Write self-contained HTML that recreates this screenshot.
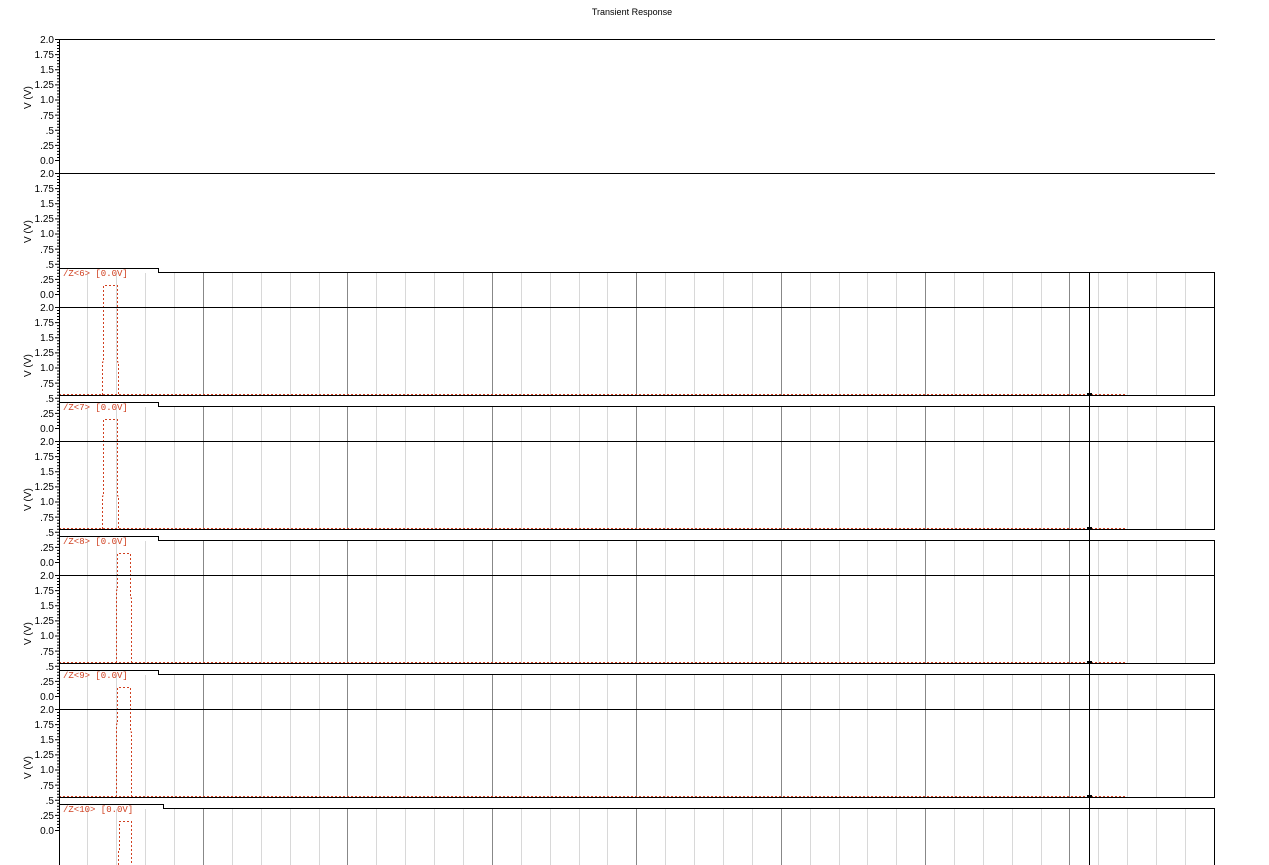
<!DOCTYPE html>
<html><head><meta charset="utf-8"><style>
html,body{margin:0;padding:0;background:#fff;width:1269px;height:865px;overflow:hidden}
svg{display:block}
text{font-family:"Liberation Sans",sans-serif;font-size:10px;fill:#000}
.lbl{font-family:"Liberation Mono",monospace;font-size:9px;fill:#d04020}
</style></head><body>
<svg width="1269" height="865" viewBox="0 0 1269 865" xmlns="http://www.w3.org/2000/svg">
<defs>
<g id="grid">
<path stroke="#d8d8d8" stroke-width="1" d="M87.5 0v122M116.5 0v122M145.5 0v122M174.5 0v122M232.5 0v122M261.5 0v122M290.5 0v122M319.5 0v122M376.5 0v122M405.5 0v122M434.5 0v122M463.5 0v122M521.5 0v122M550.5 0v122M579.5 0v122M607.5 0v122M665.5 0v122M694.5 0v122M723.5 0v122M752.5 0v122M810.5 0v122M839.5 0v122M867.5 0v122M896.5 0v122M954.5 0v122M983.5 0v122M1012.5 0v122M1041.5 0v122M1098.5 0v122M1127.5 0v122M1156.5 0v122M1185.5 0v122"/>
<path stroke="#888" stroke-width="1" d="M203.5 0v122M347.5 0v122M492.5 0v122M636.5 0v122M781.5 0v122M925.5 0v122M1069.5 0v122"/>
</g>
<g id="ticks" stroke="#000" stroke-width="1">
<path d="M55 0.5h4M55 15.6h4M55 30.8h4M55 45.9h4M55 61h4M55 76.1h4M55 91.2h4M55 106.4h4M55 121.5h4"/>
<path d="M57 3.5h2M57 6.5h2M57 9.5h2M57 12.5h2M57 18.6h2M57 21.6h2M57 24.7h2M57 27.7h2M57 33.8h2M57 36.8h2M57 39.8h2M57 42.9h2M57 48.9h2M57 51.9h2M57 55h2M57 58h2M57 64h2M57 67.1h2M57 70.1h2M57 73.1h2M57 79.2h2M57 82.2h2M57 85.2h2M57 88.2h2M57 94.3h2M57 97.3h2M57 100.3h2M57 103.4h2M57 109.4h2M57 112.4h2M57 115.4h2M57 118.5h2"/>
</g>
</defs>

<text x="632" y="15" text-anchor="middle" style="font-size:9px">Transient Response</text>

<use href="#ticks" y="39"/>
<use href="#ticks" y="173"/>
<use href="#ticks" y="307"/>
<use href="#ticks" y="441"/>
<use href="#ticks" y="575"/>
<use href="#ticks" y="709"/>

<use href="#grid" y="273"/>
<use href="#grid" y="407"/>
<use href="#grid" y="541"/>
<use href="#grid" y="675"/>
<use href="#grid" y="809"/>

<g fill="#fff"><rect x="60" y="269" width="98" height="4"/><rect x="60" y="403" width="98" height="4"/><rect x="60" y="537" width="98" height="4"/><rect x="60" y="671" width="98" height="4"/><rect x="60" y="805" width="103" height="4"/></g>

<g fill="none" stroke="#d04020" stroke-width="1" stroke-dasharray="2,2">
<path d="M102.5 395V362H103.5V285.5H117.5V362H118.5V395"/>
<path d="M102.5 529V496H103.5V419.5H117.5V496H118.5V529"/>
<path d="M116.5 663V590H117.5V553.5H130.5V598H131.5V663"/>
<path d="M116.5 797V724H117.5V687.5H130.5V732H131.5V797"/>
<path d="M118.5 865V850H119.5V821.5H131.5V865"/>
<path d="M59 394.5H1126M59 528.5H1126M59 662.5H1126M59 796.5H1126"/>
</g>

<g fill="none" stroke="#000" stroke-width="1">
<path d="M59.5 39v826"/>
<path d="M59 39.5H1215M59 173.5H1215M59 307.5H1215M59 441.5H1215M59 575.5H1215M59 709.5H1215"/>
<path d="M59 268.5H158.5V272.5H1214.5V395.5H59"/>
<path d="M59 402.5H158.5V406.5H1214.5V529.5H59"/>
<path d="M59 536.5H158.5V540.5H1214.5V663.5H59"/>
<path d="M59 670.5H158.5V674.5H1214.5V797.5H59"/>
<path d="M59 804.5H163.5V808.5H1214.5V865"/>
<path d="M1089.5 273V865"/>
</g>
<g fill="#000"><rect x="1087" y="393" width="5" height="2"/><rect x="1087" y="527" width="5" height="2"/><rect x="1087" y="661" width="5" height="2"/><rect x="1087" y="795" width="5" height="2"/></g>

<g text-anchor="end">
<text x="54" y="43">2.0</text><text x="54" y="58">1.75</text><text x="54" y="73">1.5</text><text x="54" y="88">1.25</text><text x="54" y="103">1.0</text><text x="54" y="119">.75</text><text x="54" y="134">.5</text><text x="54" y="149">.25</text><text x="54" y="164">0.0</text>
<text x="54" y="177">2.0</text><text x="54" y="192">1.75</text><text x="54" y="207">1.5</text><text x="54" y="222">1.25</text><text x="54" y="237">1.0</text><text x="54" y="253">.75</text><text x="54" y="268">.5</text><text x="54" y="283">.25</text><text x="54" y="298">0.0</text>
<text x="54" y="311">2.0</text><text x="54" y="326">1.75</text><text x="54" y="341">1.5</text><text x="54" y="356">1.25</text><text x="54" y="371">1.0</text><text x="54" y="387">.75</text><text x="54" y="402">.5</text><text x="54" y="417">.25</text><text x="54" y="432">0.0</text>
<text x="54" y="445">2.0</text><text x="54" y="460">1.75</text><text x="54" y="475">1.5</text><text x="54" y="490">1.25</text><text x="54" y="505">1.0</text><text x="54" y="521">.75</text><text x="54" y="536">.5</text><text x="54" y="551">.25</text><text x="54" y="566">0.0</text>
<text x="54" y="579">2.0</text><text x="54" y="594">1.75</text><text x="54" y="609">1.5</text><text x="54" y="624">1.25</text><text x="54" y="639">1.0</text><text x="54" y="655">.75</text><text x="54" y="670">.5</text><text x="54" y="685">.25</text><text x="54" y="700">0.0</text>
<text x="54" y="713">2.0</text><text x="54" y="728">1.75</text><text x="54" y="743">1.5</text><text x="54" y="758">1.25</text><text x="54" y="773">1.0</text><text x="54" y="789">.75</text><text x="54" y="804">.5</text><text x="54" y="819">.25</text><text x="54" y="834">0.0</text>
</g>

<g style="font-size:8px">
<text transform="translate(31,109) rotate(-90)">V (V)</text>
<text transform="translate(31,243) rotate(-90)">V (V)</text>
<text transform="translate(31,377) rotate(-90)">V (V)</text>
<text transform="translate(31,511) rotate(-90)">V (V)</text>
<text transform="translate(31,645) rotate(-90)">V (V)</text>
<text transform="translate(31,779) rotate(-90)">V (V)</text>
</g>

<text class="lbl" x="63" y="276">/Z&lt;6&gt; [0.0V]</text>
<text class="lbl" x="63" y="410">/Z&lt;7&gt; [0.0V]</text>
<text class="lbl" x="63" y="544">/Z&lt;8&gt; [0.0V]</text>
<text class="lbl" x="63" y="678">/Z&lt;9&gt; [0.0V]</text>
<text class="lbl" x="63" y="812">/Z&lt;10&gt; [0.0V]</text>
</svg>
</body></html>
